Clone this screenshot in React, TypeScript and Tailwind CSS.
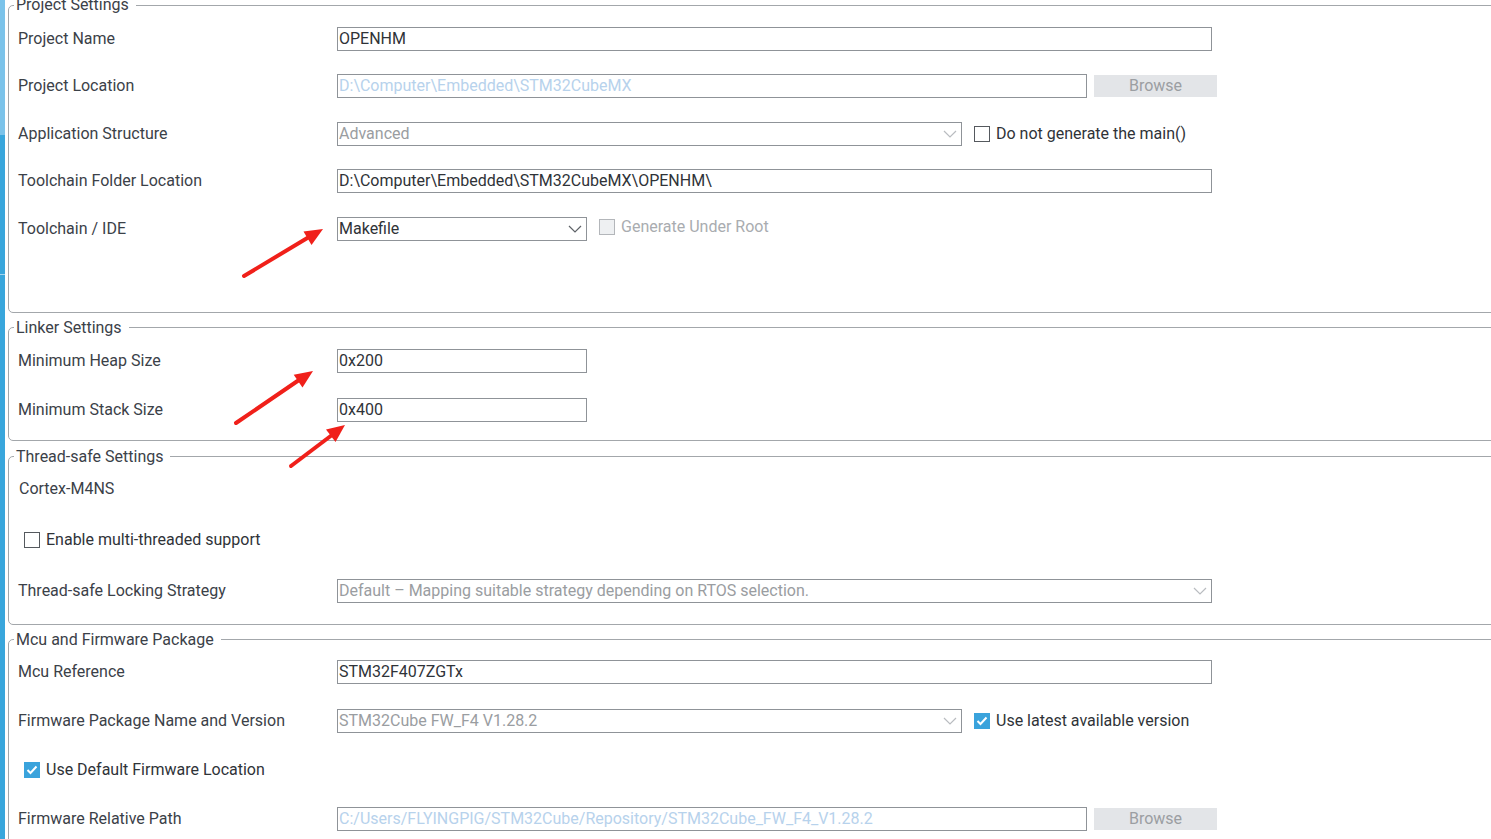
import React from 'react';

const LABEL = 'w-[319px] shrink-0 text-[16px] text-[#3b4148]';
const BOX = 'h-[24px] border border-[#8f9398] bg-white flex items-center pl-[1px] text-[16px] whitespace-nowrap overflow-hidden';

const Chevron: React.FC<{ disabled?: boolean }> = ({ disabled }) => (
  <svg width="14" height="8" viewBox="0 0 14 8" className="mr-[4px] shrink-0">
    <path d="M1 1 L7 7 L13 1" fill="none" stroke={disabled ? '#b9bcc0' : '#5f6368'} strokeWidth="1.2" />
  </svg>
);

const Field: React.FC<{ value: string; width: string; tone?: 'normal' | 'path' | 'dim' }> = ({ value, width, tone = 'normal' }) => {
  const color = tone === 'path' ? 'text-[#b7d2ec]' : tone === 'dim' ? 'text-[#9a9da1]' : 'text-[#2f3338]';
  return <div className={`${BOX} ${width} ${color}`}>{value}</div>;
};

const Select: React.FC<{ value: string; width: string; disabled?: boolean }> = ({ value, width, disabled }) => (
  <div className={`${BOX} ${width} justify-between ${disabled ? 'text-[#9a9da1]' : 'text-[#2f3338]'}`}>
    <span>{value}</span>
    <Chevron disabled={disabled} />
  </div>
);

const Browse = () => (
  <div className="ml-[7px] w-[123px] h-[22px] bg-[#e3e5e8] flex items-center justify-center text-[16px] text-[#9b9ea2]">
    Browse
  </div>
);

const Check: React.FC<{ label: string; checked?: boolean; disabled?: boolean; className?: string }> = ({
  label,
  checked,
  disabled,
  className = '',
}) => (
  <div className={`flex items-center ${className}`}>
    {checked ? (
      <div className="w-[16px] h-[16px] bg-[#3aa3dc] flex items-center justify-center">
        <svg width="12" height="10" viewBox="0 0 12 10">
          <path d="M1.5 5 L4.5 8 L10.5 1.5" fill="none" stroke="white" strokeWidth="2" />
        </svg>
      </div>
    ) : (
      <div
        className={`w-[16px] h-[16px] border-[1.5px] ${
          disabled ? 'border-[#b3b6ba] bg-[#eef0f2]' : 'border-[#55595e] bg-white'
        }`}
      />
    )}
    <span className={`ml-[6px] text-[16px] ${disabled ? 'text-[#a9acb0]' : 'text-[#2f3338]'}`}>{label}</span>
  </div>
);

const Group: React.FC<{ title: string; className?: string; children: React.ReactNode }> = ({
  title,
  className = '',
  children,
}) => (
  <fieldset className={`border border-[#a3a7ab] rounded-[5px] pl-[9px] min-w-0 ${className}`}>
    <legend className="ml-[-4px] pl-[2px] pr-[7px] text-[16px] leading-[18px] text-[#3b4148]">{title}</legend>
    {children}
  </fieldset>
);

export default function App() {
  return (
    <div className="relative w-[1491px] h-[839px] overflow-hidden bg-white flex font-['Roboto',_'Liberation_Sans',_sans-serif]">
      <div className="w-[5px] shrink-0 flex flex-col">
        <div className="h-[135px] bg-[#7bc3ea]" />
        <div className="h-[139px] bg-[#39a6dc]" />
        <div className="h-px bg-[#a6d6f0]" />
        <div className="flex-1 bg-[#39a6dc]" />
      </div>

      <div className="pl-[3px] shrink-0 w-[1520px] mt-[-4px]">
        <Group title="Project Settings" className="pt-[1px] pb-[59px]">
          <div className="flex items-center h-[47.5px]">
            <div className={LABEL}>Project Name</div>
            <Field value="OPENHM" width="w-[875px]" />
          </div>
          <div className="flex items-center h-[47.5px]">
            <div className={LABEL}>Project Location</div>
            <Field value="D:\Computer\Embedded\STM32CubeMX" width="w-[750px]" tone="path" />
            <Browse />
          </div>
          <div className="flex items-center h-[47.5px]">
            <div className={LABEL}>Application Structure</div>
            <Select value="Advanced" width="w-[625px]" disabled />
            <Check label="Do not generate the main()" className="ml-[12px]" />
          </div>
          <div className="flex items-center h-[47.5px]">
            <div className={LABEL}>Toolchain Folder Location</div>
            <Field value="D:\Computer\Embedded\STM32CubeMX\OPENHM\" width="w-[875px]" />
          </div>
          <div className="flex items-center h-[47.5px]">
            <div className={LABEL}>Toolchain / IDE</div>
            <Select value="Makefile" width="w-[250px]" />
            <Check label="Generate Under Root" disabled className="ml-[12px] -mt-[4px]" />
          </div>
        </Group>

        <Group title="Linker Settings" className="mt-[6px] pb-[5px]">
          <div className="flex items-center h-[49px]">
            <div className={LABEL}>Minimum Heap Size</div>
            <Field value="0x200" width="w-[250px]" />
          </div>
          <div className="flex items-center h-[49px]">
            <div className={LABEL}>Minimum Stack Size</div>
            <Field value="0x400" width="w-[250px]" />
          </div>
        </Group>

        <Group title="Thread-safe Settings" className="mt-[7px] pb-[7px]">
          <div className="flex items-center h-[51px] mt-[-2px]">
            <div className={`${LABEL} ml-px`}>Cortex-M4NS</div>
          </div>
          <div className="flex items-center h-[51px]">
            <Check label="Enable multi-threaded support" className="ml-[6px]" />
          </div>
          <div className="flex items-center h-[51px]">
            <div className={LABEL}>Thread-safe Locking Strategy</div>
            <Select
              value="Default – Mapping suitable strategy depending on RTOS selection."
              width="w-[875px]"
              disabled
            />
          </div>
        </Group>

        <Group title="Mcu and Firmware Package" className="mt-[6px] pb-[20px]">
          <div className="flex items-center h-[49px] mt-[-1px]">
            <div className={LABEL}>Mcu Reference</div>
            <Field value="STM32F407ZGTx" width="w-[875px]" />
          </div>
          <div className="flex items-center h-[49px]">
            <div className={LABEL}>Firmware Package Name and Version</div>
            <Select value="STM32Cube FW_F4 V1.28.2" width="w-[625px]" disabled />
            <Check label="Use latest available version" checked className="ml-[12px]" />
          </div>
          <div className="flex items-center h-[49px]">
            <Check label="Use Default Firmware Location" checked className="ml-[6px]" />
          </div>
          <div className="flex items-center h-[49px]">
            <div className={LABEL}>Firmware Relative Path</div>
            <Field
              value="C:/Users/FLYINGPIG/STM32Cube/Repository/STM32Cube_FW_F4_V1.28.2"
              width="w-[750px]"
              tone="path"
            />
            <Browse />
          </div>
        </Group>
      </div>

      {/* annotation arrows drawn over the form */}
      <svg className="absolute inset-0 pointer-events-none" width="1491" height="839">
        <g stroke="#f0201a" strokeWidth="4" strokeLinecap="round" fill="#f0201a">
          <line x1="244" y1="276" x2="309" y2="237" />
          <line x1="236" y1="423" x2="299" y2="380" />
          <line x1="291" y1="466" x2="332" y2="435" />
        </g>
        <g fill="#f0201a">
          <polygon points="323,229 311.5,245 303.5,231.5" />
          <polygon points="313,371 302.5,387.5 293.7,374.7" />
          <polygon points="345,425 335.5,442 326,429.5" />
        </g>
      </svg>
    </div>
  );
}
